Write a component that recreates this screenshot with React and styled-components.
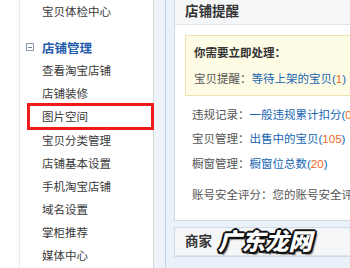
import React from 'react';
import styled, { createGlobalStyle } from 'styled-components';

const Global = createGlobalStyle`
  html, body { margin: 0; padding: 0; background: #fff; }
  body {
    width: 350px;
    height: 268px;
    overflow: hidden;
    font-family: "Liberation Sans", "Noto Sans CJK SC", sans-serif;
    font-size: 11.5px;
    color: #333;
  }
`;

const Page = styled.div`
  display: flex;
  width: 350px;
  height: 268px;
  overflow: hidden;
  background: #fff;
`;

const LeftMargin = styled.div`
  flex: none;
  width: 19px;
  background: #fff;
`;

const Sidebar = styled.nav`
  flex: none;
  width: 133px;
  border-left: 1px solid #e9e9e9;
  border-right: 1px solid #d8d8d8;
  background: #fff;
  padding-top: 1px;
`;

const Item = styled.div`
  position: relative;
  height: 23.2px;
  line-height: 23.2px;
  padding-left: 22px;
  color: #3a3a3a;
  white-space: nowrap;
  &::after {
    content: '';
    display: ${(p) => (p.$marked ? 'block' : 'none')};
    position: absolute;
    left: 7px;
    right: -1px;
    top: -3px;
    bottom: 0;
    border: 3px solid #ee1c1c;
  }
`;

const GroupTitle = styled.div`
  display: flex;
  align-items: center;
  height: 25px;
  margin-top: 10.8px;
  padding-left: 6px;
  color: #1f5cab;
  font-weight: bold;
  font-size: 12.5px;
`;

const MinusBox = styled.span`
  position: relative;
  box-sizing: border-box;
  width: 8px;
  height: 8px;
  border: 1px solid #8a9bb3;
  margin-right: 8px;
  &::before {
    content: '';
    position: absolute;
    left: 1px;
    right: 1px;
    top: 2.5px;
    height: 1px;
    background: #6d7f99;
  }
`;

const Main = styled.main`
  flex: 1;
  min-width: 0;
  background: #eef3fa;
  padding-left: 11px;
  display: flex;
`;

const Column = styled.div`
  flex: 1;
  min-width: 0;
  border-left: 1px solid #bfd2ec;
  background: #ebf1f9;
  padding-left: 8px;
  display: flex;
  flex-direction: column;
  gap: 6px;
`;

const Panel = styled.section`
  position: relative;
  background: #fff;
  border: 1px solid #cfdaea;
  border-top: ${(p) => (p.$cut ? 'none' : '1px solid #cfdaea')};
  border-right: none;
  overflow: hidden;
`;

const PanelHeader = styled.div`
  height: ${(p) => p.$h}px;
  line-height: ${(p) => p.$h}px;
  background: #f5f6f8;
  border-bottom: 1px solid #dfe4ea;
  padding-left: 10px;
  font-size: 13.5px;
  font-weight: bold;
  color: #333;
  white-space: nowrap;
`;

const PanelBody = styled.div`
  padding: 10px 0 12.75px 10px;
`;

const Notice = styled.div`
  background: #fffce5;
  border: 1px solid #f1e2ac;
  border-right: none;
  padding: 7px 0 6px 8px;
`;

const Line = styled.div`
  height: ${(p) => p.$h || 24.5}px;
  line-height: ${(p) => p.$h || 24.5}px;
  padding-left: ${(p) => p.$pad ?? 7}px;
  margin-top: ${(p) => p.$mt || 0}px;
  white-space: nowrap;
  color: ${(p) => (p.$bold ? '#333' : '#555')};
  font-weight: ${(p) => (p.$bold ? 'bold' : 'normal')};
`;

const Link = styled.span`
  color: #1765b3;
`;

const Num = styled.span`
  color: #f06a1a;
`;

const Watermark = styled.div`
  position: absolute;
  left: 43px;
  top: -3px;
  font-family: "Noto Sans CJK SC", sans-serif;
  font-weight: 900;
  font-size: 23.5px;
  line-height: 30px;
  color: #fff;
  font-style: italic;
  text-shadow:
    2px 0 0 #111, -2px 0 0 #111, 0 2px 0 #111, 0 -2px 0 #111,
    1.5px 1.5px 0 #111, -1.5px 1.5px 0 #111, 1.5px -1.5px 0 #111, -1.5px -1.5px 0 #111,
    2.5px 2.5px 1px rgba(0,0,0,0.45);
  pointer-events: none;
`;

const menu = ['查看淘宝店铺', '店铺装修', '图片空间', '宝贝分类管理', '店铺基本设置', '手机淘宝店铺', '域名设置', '掌柜推荐', '媒体中心'];

export default function App() {
  return (
    <>
      <Global />
      <Page>
        <LeftMargin />
        <Sidebar>
          <Item>宝贝体检中心</Item>
          <GroupTitle>
            <MinusBox />
            店铺管理
          </GroupTitle>
          {menu.map((m) => (
            <Item key={m} $marked={m === '图片空间'}>{m}</Item>
          ))}
        </Sidebar>
        <Main>
          <Column>
            <Panel $cut>
              <PanelHeader $h={24}>店铺提醒</PanelHeader>
              <PanelBody>
                <Notice>
                  <Line $h={20} $pad={0} $bold>你需要立即处理：</Line>
                  <Line $h={20} $pad={0} $mt={6}>宝贝提醒：<Link>等待上架的宝贝(</Link><Num>1</Num><Link>)</Link></Line>
                </Notice>
                <Line $mt={6.75}>违规记录：<Link>一般违规累计扣分(</Link><Num>0</Num><Link>)</Link></Line>
                <Line>宝贝管理：<Link>出售中的宝贝(</Link><Num>105</Num><Link>)</Link></Line>
                <Line>橱窗管理：<Link>橱窗位总数(</Link><Num>20</Num><Link>)</Link></Line>
                <Line $mt={6.5}>账号安全评分：您的账号安全评分较高，请继续保持</Line>
              </PanelBody>
            </Panel>
            <Panel>
              <PanelHeader $h={27}>商家</PanelHeader>
              <Watermark>广东龙网</Watermark>
            </Panel>
          </Column>
        </Main>
      </Page>
    </>
  );
}
